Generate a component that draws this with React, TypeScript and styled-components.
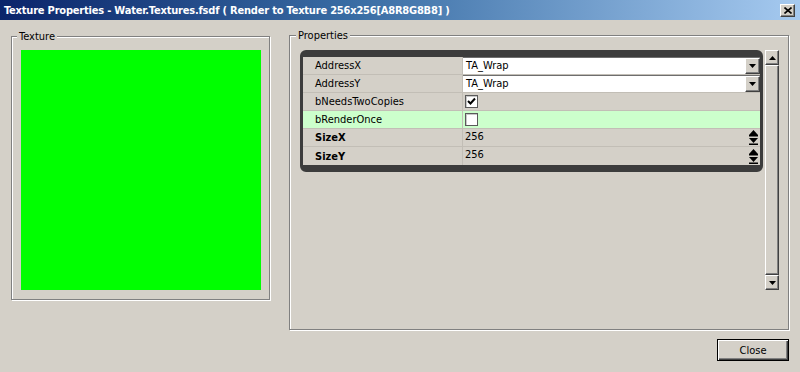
import React from 'react';
import styled, { createGlobalStyle, css } from 'styled-components';

const GlobalStyle = createGlobalStyle`
    html, body {
        margin: 0;
        padding: 0;
        background: #d4d0c8;
    }
    body {
        font-family: Tahoma, "DejaVu Sans Condensed", "Liberation Sans", sans-serif;
        font-size: 11px;
        color: #000;
    }
`;

const raised = css`
    border: 1px solid;
    border-color: #ffffff #404040 #404040 #ffffff;
    box-shadow: inset -1px -1px 0 #808080;
    background: #d4d0c8;
    box-sizing: border-box;
`;

const Window = styled.div`
    width: 800px;
    height: 372px;
    background: #d4d0c8;
    display: flex;
    flex-direction: column;
    overflow: hidden;
`;

const TitleBar = styled.div`
    height: 20px;
    display: flex;
    align-items: center;
    justify-content: space-between;
    padding: 0 5px 0 4px;
    background: linear-gradient(to right, #0a246a 0%, #3a6ea5 45%, #a6caf0 100%);
`;

const TitleText = styled.div`
    color: #fff;
    font-weight: bold;
    font-size: 11px;
    letter-spacing: -0.2px;
    white-space: nowrap;
`;

const CaptionButton = styled.div`
    ${raised};
    width: 15px;
    height: 13px;
    display: flex;
    align-items: center;
    justify-content: center;
`;

const Panels = styled.div`
    display: flex;
    align-items: flex-start;
    gap: 19px;
    padding: 10px 0 0 11px;
`;

const Group = styled.fieldset<{ $w: number; $h: number; $pad: string; $top?: number }>`
    margin: ${(p) => p.$top || 0}px 0 0 0;
    width: ${(p) => p.$w}px;
    height: ${(p) => p.$h}px;
    box-sizing: border-box;
    padding: ${(p) => p.$pad};
    border: 1px solid #808080;
    box-shadow: inset 1px 1px 0 #fff, 1px 1px 0 #fff;
    min-width: 0;
`;

const Legend = styled.legend`
    padding: 0 2px;
    margin-left: -4px;
    font-size: 11px;
    line-height: 13px;
    background: #d4d0c8;
`;

const Swatch = styled.div`
    width: 240px;
    height: 240px;
    background: #00ff00;
`;

const PropsArea = styled.div`
    display: flex;
    align-items: flex-start;
    gap: 2px;
`;

const Grid = styled.div`
    width: 463px;
    box-sizing: border-box;
    border: 3px solid #3c3c3c;
    border-top-width: 7px;
    border-bottom-width: 7px;
    border-radius: 6px;
    background: #d4d0c8;
    overflow: hidden;
`;

const Row = styled.div<{ $highlight?: boolean }>`
    display: flex;
    height: 18px;
    box-sizing: border-box;
    border-bottom: 1px solid #c2beb6;
    background: ${(p) => (p.$highlight ? '#ccffcc' : '#d4d0c8')};
    &:last-child {
        border-bottom: none;
    }
`;

const NameCell = styled.div<{ $bold?: boolean }>`
    width: 160px;
    flex-shrink: 0;
    padding-left: 12px;
    box-sizing: border-box;
    display: flex;
    align-items: center;
    border-right: 1px solid #c2beb6;
    font-weight: ${(p) => (p.$bold ? 'bold' : 'normal')};
`;

const ValueCell = styled.div`
    flex: 1;
    display: flex;
    align-items: center;
    padding-left: 2px;
    min-width: 0;
`;

const PlainValue = styled.span`
    flex: 1;
    align-self: flex-start;
    padding-top: 1px;
`;

const Combo = styled.div`
    flex: 1;
    height: 17px;
    margin-left: -2px;
    display: flex;
    background: #fff;
    border-top: 1px solid #6e6e6e;
    box-sizing: border-box;
`;

const ComboText = styled.span`
    flex: 1;
    padding: 1px 0 0 3px;
`;

const DropButton = styled.div`
    ${raised};
    width: 15px;
    height: 16px;
    display: flex;
    align-items: center;
    justify-content: center;
`;

const CheckBox = styled.div`
    width: 13px;
    height: 13px;
    box-sizing: border-box;
    border: 1px solid #5a5a5a;
    box-shadow: inset 1px 1px 0 #c8c8c8;
    background: #fff;
    display: flex;
    align-items: center;
    justify-content: center;
`;

const Spin = styled.div`
    width: 12px;
    display: flex;
    flex-direction: column;
    margin-right: 1px;
`;

const SpinHalf = styled.div`
    height: 8px;
    display: flex;
    align-items: center;
    justify-content: center;
`;

const ScrollBar = styled.div`
    width: 14px;
    height: 240px;
    display: flex;
    flex-direction: column;
    background: #e6e3dd;
`;

const ScrollButton = styled.div`
    ${raised};
    height: 15px;
    flex-shrink: 0;
    display: flex;
    align-items: center;
    justify-content: center;
`;

const ScrollThumb = styled.div`
    ${raised};
    flex: 1;
`;

const Footer = styled.div`
    display: flex;
    justify-content: flex-end;
    padding: 9px 11px 0 0;
`;

const Button = styled.button`
    width: 72px;
    height: 22px;
    box-sizing: border-box;
    font-family: inherit;
    font-size: 11px;
    color: #000;
    background: #d4d0c8;
    border: 1px solid #000;
    box-shadow: inset 1px 1px 0 #fff, inset -1px -1px 0 #404040, inset -2px -2px 0 #808080;
    padding: 0;
`;

const Tri = ({ up, w = 7, bar = false }: { up?: boolean; w?: number; bar?: boolean }) => {
    const h = Math.ceil(w / 2);
    const pts = up ? `0,${h} ${w / 2},0 ${w},${h}` : `0,0 ${w / 2},${h} ${w},0`;
    return (
        <svg width={w} height={h + (bar ? 2 : 0)} viewBox={`0 0 ${w} ${h + (bar ? 2 : 0)}`}>
            {bar && up && <rect x={0} y={h} width={w} height={1.5} fill="#000" />}
            <polygon points={pts} fill="#000" />
            {bar && !up && <rect x={0} y={h + 0.5} width={w} height={1.5} fill="#000" />}
        </svg>
    );
};

const Check = () => (
    <svg width="9" height="9" viewBox="0 0 9 9">
        <path d="M1 4 L3.5 6.5 L8 1.5" stroke="#000" strokeWidth="2" fill="none" />
    </svg>
);

const CloseX = () => (
    <svg width="8" height="7" viewBox="0 0 8 7">
        <path d="M0.5 0.5 L7.5 6.5 M7.5 0.5 L0.5 6.5" stroke="#000" strokeWidth="1.6" />
    </svg>
);

type Prop =
    | { name: string; kind: 'combo'; value: string }
    | { name: string; kind: 'check'; value: boolean; highlight?: boolean }
    | { name: string; kind: 'spin'; value: string };

const properties: Prop[] = [
    { name: 'AddressX', kind: 'combo', value: 'TA_Wrap' },
    { name: 'AddressY', kind: 'combo', value: 'TA_Wrap' },
    { name: 'bNeedsTwoCopies', kind: 'check', value: true },
    { name: 'bRenderOnce', kind: 'check', value: false, highlight: true },
    { name: 'SizeX', kind: 'spin', value: '256' },
    { name: 'SizeY', kind: 'spin', value: '256' },
];

function PropertyRow({ prop }: { prop: Prop }) {
    return (
        <Row $highlight={prop.kind === 'check' && prop.highlight}>
            <NameCell $bold={prop.kind === 'spin'}>{prop.name}</NameCell>
            <ValueCell>
                {prop.kind === 'combo' && (
                    <Combo>
                        <ComboText>{prop.value}</ComboText>
                        <DropButton>
                            <Tri w={7} />
                        </DropButton>
                    </Combo>
                )}
                {prop.kind === 'check' && <CheckBox>{prop.value && <Check />}</CheckBox>}
                {prop.kind === 'spin' && (
                    <>
                        <PlainValue>{prop.value}</PlainValue>
                        <Spin>
                            <SpinHalf>
                                <Tri up bar w={9} />
                            </SpinHalf>
                            <SpinHalf>
                                <Tri bar w={9} />
                            </SpinHalf>
                        </Spin>
                    </>
                )}
            </ValueCell>
        </Row>
    );
}

export default function App() {
    return (
        <Window>
            <GlobalStyle />
            <TitleBar>
                <TitleText>
                    Texture Properties - Water.Textures.fsdf ( Render to Texture 256x256[A8R8G8B8] )
                </TitleText>
                <CaptionButton>
                    <CloseX />
                </CaptionButton>
            </TitleBar>
            <Panels>
                <Group $w={259} $h={270} $pad="7px 8px 8px 9px">
                    <Legend>Texture</Legend>
                    <Swatch />
                </Group>
                <Group $w={500} $h={301} $pad="8px 9px 8px 10px" $top={-1}>
                    <Legend>Properties</Legend>
                    <PropsArea>
                        <Grid>
                            {properties.map((p) => (
                                <PropertyRow key={p.name} prop={p} />
                            ))}
                        </Grid>
                        <ScrollBar>
                            <ScrollButton>
                                <Tri up w={7} />
                            </ScrollButton>
                            <ScrollThumb />
                            <ScrollButton>
                                <Tri w={7} />
                            </ScrollButton>
                        </ScrollBar>
                    </PropsArea>
                </Group>
            </Panels>
            <Footer>
                <Button>Close</Button>
            </Footer>
        </Window>
    );
}
